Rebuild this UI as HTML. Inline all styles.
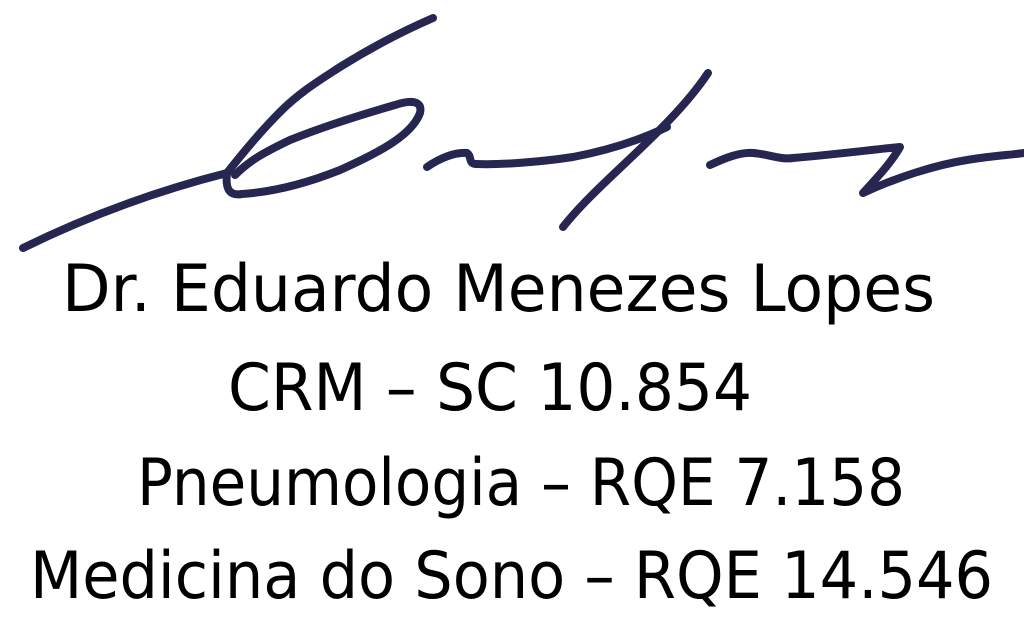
<!DOCTYPE html>
<html><head><meta charset="utf-8"><style>html,body{margin:0;padding:0;background:#fff;width:1024px;height:631px;overflow:hidden}</style></head>
<body>
<svg width="1024" height="631" viewBox="0 0 1024 631" xmlns="http://www.w3.org/2000/svg">
<g fill="none" stroke="#262650" stroke-width="8" stroke-linecap="round" stroke-linejoin="round">
<path d="M23,248 C90,215 160,190 227,173 C245,150 262,130 280,112 C300,92 320,80 340,67 C380,42 410,28 433,18"/>
<path d="M227,173 C225,190 230,196 242,194 C272,192 305,184 340,170 C380,152 412,135 420,113 C423,100 410,100 395,105 C360,115 320,128 290,140 C265,152 250,160 235,175"/>
<path d="M427,167 C440,158 455,152 467,153 C472,156 468,164 476,164 C500,165 540,162 573,157 C610,150 640,140 667,127"/>
<path d="M708,73 C670,130 600,180 563,227"/>
<path d="M710,165 C725,158 740,152 753,153 C768,154 780,160 793,158 C830,155 870,150 900,147 C890,165 870,185 863,193 C895,178 935,165 967,160 C990,156 1010,155 1024,153"/>
</g>
<g font-family="'DejaVu Sans','Liberation Sans',sans-serif" font-size="65" fill="#000">
<text x="62" y="311" textLength="873" lengthAdjust="spacingAndGlyphs">Dr. Eduardo Menezes Lopes</text>
<text x="228" y="410" textLength="524" lengthAdjust="spacingAndGlyphs">CRM – SC 10.854</text>
<text x="137" y="505" textLength="768" lengthAdjust="spacingAndGlyphs">Pneumologia – RQE 7.158</text>
<text x="30" y="598" textLength="963" lengthAdjust="spacingAndGlyphs">Medicina do Sono – RQE 14.546</text>
</g>
</svg>
</body></html>
